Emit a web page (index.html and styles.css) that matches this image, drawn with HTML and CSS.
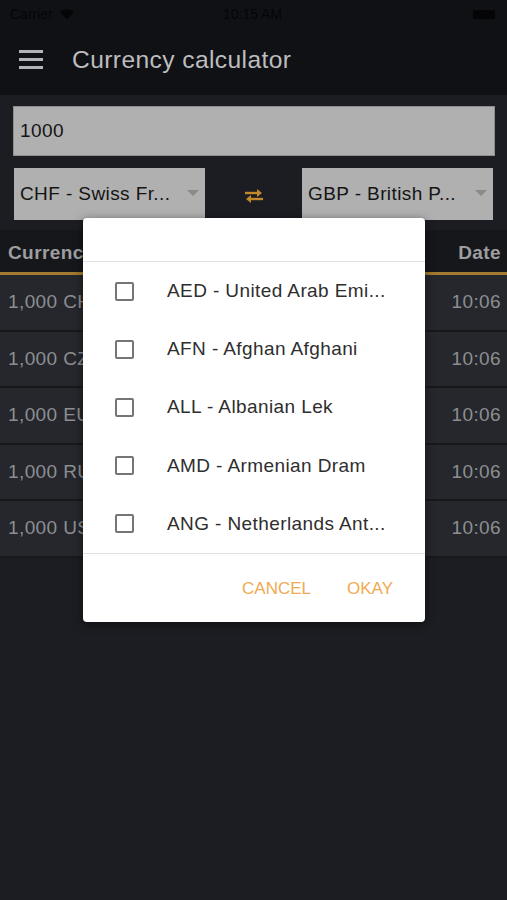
FILE: index.html
```html
<!DOCTYPE html>
<html lang="en">
<head>
  <meta charset="UTF-8" />
  <meta name="viewport" content="width=device-width, initial-scale=1.0" />
  <title>Currency calculator</title>
  <link rel="stylesheet" href="styles.css">
</head>
<body>
<div class="screen">
  <div class="statusbar">
    <span class="carrier">Carrier
      <svg class="wifi" width="16" height="12" viewBox="0 0 16 12"><path d="M8 11.5 L1 4 A10 10 0 0 1 15 4 Z" fill="#050507"/></svg>
    </span>
    <span class="clock">10:15 AM</span>
    <span class="battery"></span>
  </div>

  <div class="appbar">
    <div class="menu"><span></span><span></span><span></span></div>
    <h1>Currency calculator</h1>
  </div>

  <div class="content">
    <div class="amount">1000</div>

    <div class="pickers">
      <div class="picker">CHF - Swiss Fr...<i class="caret"></i></div>
      <div class="swap">
        <svg width="24" height="18" viewBox="0 0 24 18">
          <path d="M3 6 H17" stroke="#c4882c" stroke-width="2.4" fill="none"/>
          <path d="M15 2 L20 6 L15 10 Z" fill="#c4882c"/>
          <path d="M21 12 H7" stroke="#c4882c" stroke-width="2.4" fill="none"/>
          <path d="M9 8 L4 12 L9 16 Z" fill="#c4882c"/>
        </svg>
      </div>
      <div class="picker">GBP - British P...<i class="caret"></i></div>
    </div>

    <table class="rates">
      <thead>
        <tr><th class="left">Currency</th><th class="right">Date</th></tr>
      </thead>
      <tbody>
        <tr><td class="left">1,000 CHF</td><td class="right">10:06</td></tr>
        <tr><td class="left">1,000 CZK</td><td class="right">10:06</td></tr>
        <tr><td class="left">1,000 EUR</td><td class="right">10:06</td></tr>
        <tr><td class="left">1,000 RUB</td><td class="right">10:06</td></tr>
        <tr><td class="left">1,000 USD</td><td class="right">10:06</td></tr>
      </tbody>
    </table>
  </div>

  <div class="dialog">
    <div class="dialog-title"></div>
    <ul class="options">
      <li><span class="box"></span>AED - United Arab Emi...</li>
      <li><span class="box"></span>AFN - Afghan Afghani</li>
      <li><span class="box"></span>ALL - Albanian Lek</li>
      <li><span class="box"></span>AMD - Armenian Dram</li>
      <li><span class="box"></span>ANG - Netherlands Ant...</li>
    </ul>
    <div class="actions">
      <button>CANCEL</button>
      <button>OKAY</button>
    </div>
  </div>
</div>
</body>
</html>
```

FILE: styles.css
```css
body { margin: 0; background: #1b1d22; font-family: "Liberation Sans", Arial, sans-serif; }
.screen { position: relative; width: 507px; height: 900px; background: #1b1d22; overflow: hidden; }

.statusbar { height: 28px; background: #101115; display: flex; align-items: center; justify-content: space-between; padding: 0 12px 0 10px; font-size: 14px; color: #050507; }
.carrier { display: flex; align-items: center; gap: 6px; width: 120px; }
.clock { font-size: 14px; }
.battery { width: 22px; height: 9px; background: #050507; border-radius: 2px; margin-left: 98px; }

.appbar { height: 67px; background: #101115; display: flex; align-items: center; padding-bottom: 4px; box-sizing: border-box; }
.menu { width: 24px; margin: 0 29px 0 19px; display: flex; flex-direction: column; gap: 5px; }
.menu span { height: 3px; background: #b4b4b6; }
.appbar h1 { margin: 0; font-size: 24.6px; letter-spacing: 0.4px; font-weight: normal; color: #bdbdbf; }

.content { padding-top: 11px; }
.amount { margin: 0 12px 0 13px; height: 50px; background: #b0b0b0; border: 1px solid #8e8e8e; box-sizing: border-box; padding-left: 6px; display: flex; align-items: center; font-size: 19px; letter-spacing: 0.4px; color: #141414; }

.pickers { display: flex; align-items: center; margin: 12px 14px 0 14px; height: 52px; }
.picker { position: relative; width: 191px; height: 52px; background: #b0b0b0; box-sizing: border-box; padding-left: 6px; display: flex; align-items: center; font-size: 19px; letter-spacing: 0.4px; color: #141414; }
.caret { position: absolute; right: 6px; top: 22px; border-left: 6px solid transparent; border-right: 6px solid transparent; border-top: 6px solid #8a8a8a; }
.swap { flex: 1; display: flex; justify-content: center; padding-top: 4px; }

.rates { width: 100%; border-collapse: collapse; margin-top: 10px; font-size: 19px; letter-spacing: 0.4px; }
.rates th { height: 38px; padding: 4px 0 0; font-weight: bold; color: #9e9ea0; background: #16171b; border-bottom: 3px solid #a27a30; }
.rates td { height: 54.5px; padding: 0; color: #8d8e92; background: #25272c; border-bottom: 2px solid #17181c; }
.rates .left { text-align: left; padding-left: 8px; }
.rates .right { text-align: right; padding-right: 6px; }

.dialog { position: absolute; left: 83px; top: 218px; width: 342px; background: #fff; border-radius: 4px; box-shadow: 0 2px 10px rgba(0,0,0,0.5); }
.dialog-title { height: 43px; border-bottom: 1px solid #e2e2e2; }
.options { list-style: none; margin: 0; padding: 0; border-bottom: 1px solid #e2e2e2; }
.options li { height: 58.2px; display: flex; align-items: center; padding-left: 32px; font-size: 19px; letter-spacing: 0.4px; color: #2e2e2e; }
.box { width: 15px; height: 15px; border: 2px solid #757575; border-radius: 2px; margin-right: 33px; }
.actions { height: 68px; display: flex; justify-content: flex-end; align-items: center; gap: 36px; padding: 2px 32px 0 0; box-sizing: border-box; }
.actions button { background: none; border: none; padding: 0; font-family: inherit; font-size: 17px; color: #f0aa52; cursor: pointer; }
```
